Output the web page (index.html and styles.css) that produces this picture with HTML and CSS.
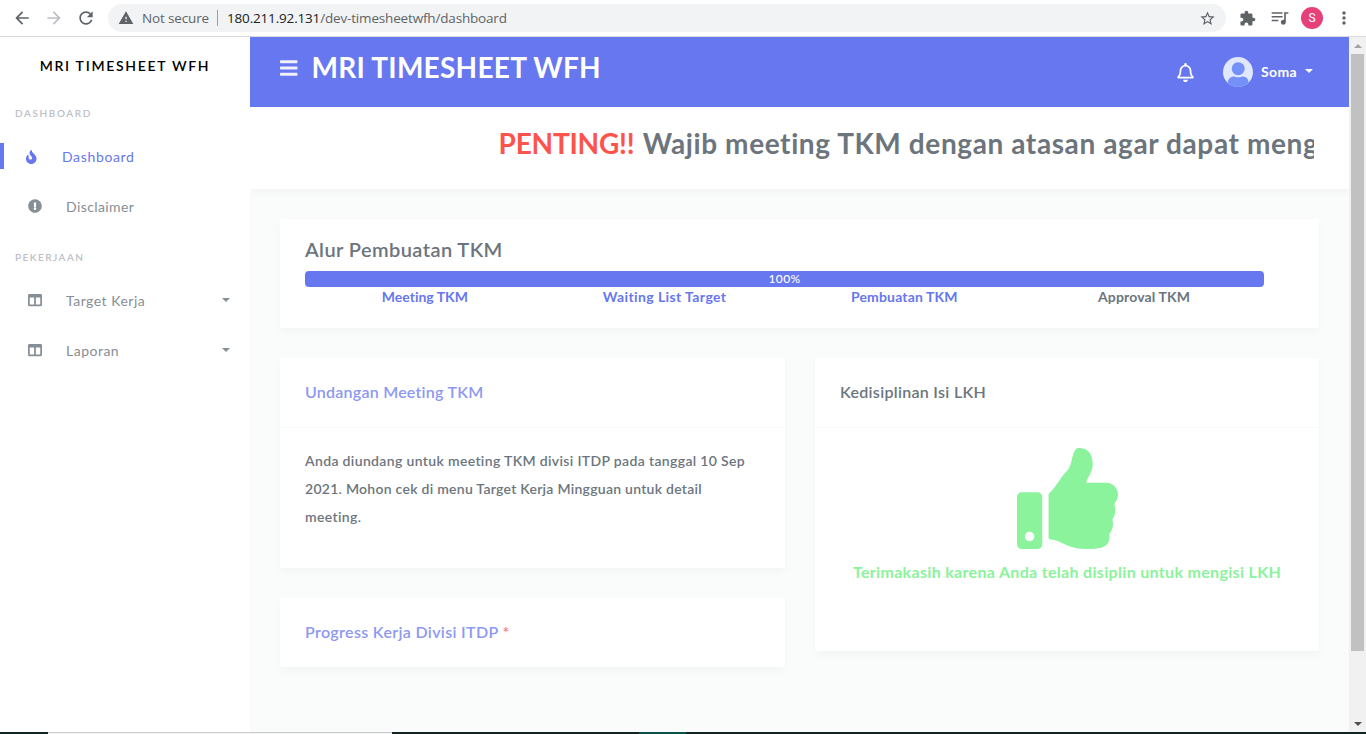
FILE: index.html
```
<!DOCTYPE html>
<html lang="id">
<head>
<meta charset="utf-8">
<title>MRI TIMESHEET WFH</title>
<link rel="stylesheet" href="styles.css">
</head>
<body>
<div class="window">
  <header class="browser">
    <svg class="nav-icon" viewBox="0 0 24 24"><path d="M20 11H7.83l5.59-5.59L12 4l-8 8 8 8 1.41-1.41L7.83 13H20v-2z"/></svg>
    <svg class="nav-icon disabled" viewBox="0 0 24 24"><path d="M12 4l-1.41 1.41L16.17 11H4v2h12.17l-5.58 5.59L12 20l8-8z"/></svg>
    <svg class="nav-icon" viewBox="0 0 24 24"><path d="M17.65 6.35C16.2 4.9 14.21 4 12 4c-4.42 0-7.99 3.58-7.99 8s3.57 8 7.99 8c3.73 0 6.84-2.55 7.73-6h-2.08c-.82 2.33-3.04 4-5.65 4-3.31 0-6-2.69-6-6s2.69-6 6-6c1.66 0 3.14.69 4.22 1.78L13 11h7V4l-2.35 2.35z"/></svg>
    <div class="omnibox">
      <svg class="warn" viewBox="0 0 24 24"><path d="M1 21h22L12 2 1 21zm12-3h-2v-2h2v2zm0-4h-2v-4h2v4z"/></svg>
      <span class="secure">Not secure</span>
      <span class="divider"></span>
      <span class="url"><b>180.211.92.131</b>/dev-timesheetwfh/dashboard</span>
      <svg class="star" viewBox="0 0 24 24"><path d="M22 9.24l-7.19-.62L12 2 9.19 8.63 2 9.24l5.46 4.73L5.82 21 12 17.27 18.18 21l-1.63-7.03L22 9.24zM12 15.4l-3.76 2.27 1-4.28-3.32-2.88 4.38-.38L12 6.1l1.71 4.04 4.38.38-3.32 2.88 1 4.28L12 15.4z"/></svg>
    </div>
    <svg class="ext" viewBox="0 0 24 24"><path d="M20.5 11H19V7c0-1.1-.9-2-2-2h-4V3.5C13 2.12 11.88 1 10.5 1S8 2.12 8 3.5V5H4c-1.1 0-1.99.9-1.99 2v3.8H3.5c1.49 0 2.7 1.21 2.7 2.7s-1.21 2.7-2.7 2.7H2V20c0 1.1.9 2 2 2h3.8v-1.5c0-1.49 1.21-2.7 2.7-2.7 1.49 0 2.7 1.21 2.7 2.7V22H17c1.1 0 2-.9 2-2v-4h1.5c1.38 0 2.5-1.12 2.5-2.5S21.88 11 20.5 11z"/></svg>
    <svg class="media" viewBox="0 0 24 24"><path d="M15 5H2v1.900h13V5zm0 4.500H2v1.900h13V9.500zM2 15.900h8V14H2v1.900zM17 5v9.180c-.31-.11-.65-.18-1-.18-1.66 0-3 1.34-3 3s1.34 3 3 3 3-1.34 3-3V7h3V5h-5z"/></svg>
    <span class="profile">S</span>
    <svg class="more" viewBox="0 0 24 24"><path d="M12 8c1.1 0 2-.9 2-2s-.9-2-2-2-2 .9-2 2 .9 2 2 2zm0 2c-1.1 0-2 .9-2 2s.9 2 2 2 2-.9 2-2-.9-2-2-2zm0 6c-1.1 0-2 .9-2 2s.9 2 2 2 2-.9 2-2-.9-2-2-2z"/></svg>
  </header>

  <div class="viewport">
    <aside class="sidebar">
      <div class="brand">MRI TIMESHEET WFH</div>
      <div class="section">DASHBOARD</div>
      <a class="item active"><svg class="fire" viewBox="0 0 384 512"><path d="M216 23.86c0-23.8-30.65-32.77-44.15-13.04C48 191.85 224 200 224 288c0 35.63-29.11 64.46-64.85 63.99-35.17-.45-63.15-29.77-63.15-64.94v-85.51c0-21.7-26.47-32.23-41.43-16.5C27.8 213.16 0 261.33 0 320c0 105.87 86.13 192 192 192s192-86.13 192-192c0-170.29-168-193-168-296.14z"/></svg><span>Dashboard</span></a>
      <a class="item"><svg viewBox="0 0 512 512"><path d="M504 256c0 136.997-111.043 248-248 248S8 392.997 8 256C8 119.083 119.043 8 256 8s248 111.083 248 248zm-248 50c-25.405 0-46 20.595-46 46s20.595 46 46 46 46-20.595 46-46-20.595-46-46-46zm-43.673-165.346l7.418 136c.347 6.364 5.609 11.346 11.982 11.346h48.546c6.373 0 11.635-4.982 11.982-11.346l7.418-136c.375-6.874-5.098-12.654-11.982-12.654h-63.383c-6.884 0-12.356 5.78-11.981 12.654z"/></svg><span class="disclaimer">Disclaimer</span></a>
      <div class="section second">PEKERJAAN</div>
      <a class="item"><svg viewBox="0 0 512 512"><path d="M464 32H48C21.49 32 0 53.49 0 80v352c0 26.51 21.49 48 48 48h416c26.51 0 48-21.49 48-48V80c0-26.51-21.49-48-48-48zM224 416H64V160h160v256zm224 0H288V160h160v256z"/></svg><span>Target Kerja</span><i class="caret"></i></a>
      <a class="item"><svg viewBox="0 0 512 512"><path d="M464 32H48C21.49 32 0 53.49 0 80v352c0 26.51 21.49 48 48 48h416c26.51 0 48-21.49 48-48V80c0-26.51-21.49-48-48-48zM224 416H64V160h160v256zm224 0H288V160h160v256z"/></svg><span>Laporan</span><i class="caret"></i></a>
    </aside>

    <main class="main">
      <nav class="navbar">
        <svg class="bars" viewBox="0 0 448 512"><path d="M16 132h416c8.837 0 16-7.163 16-16V76c0-8.837-7.163-16-16-16H16C7.163 60 0 67.163 0 76v40c0 8.837 7.163 16 16 16zm0 160h416c8.837 0 16-7.163 16-16v-40c0-8.837-7.163-16-16-16H16c-8.837 0-16 7.163-16 16v40c0 8.837 7.163 16 16 16zm0 160h416c8.837 0 16-7.163 16-16v-40c0-8.837-7.163-16-16-16H16c-8.837 0-16 7.163-16 16v40c0 8.837 7.163 16 16 16z"/></svg>
        <h1>MRI TIMESHEET WFH</h1>
        <svg class="bell" viewBox="0 0 448 512"><path d="M439.39 362.29c-19.32-20.76-55.47-51.99-55.47-154.29 0-77.7-54.48-139.9-127.94-155.16V32c0-17.67-14.32-32-31.98-32s-31.98 14.33-31.98 32v20.84C118.56 68.1 64.08 130.3 64.08 208c0 102.3-36.15 133.53-55.47 154.29-6 6.45-8.66 14.16-8.61 21.71.11 16.4 12.98 32 32.1 32h383.8c19.12 0 32-15.6 32.1-32 .05-7.55-2.61-15.27-8.61-21.71zM67.53 368c21.22-27.97 44.42-74.33 44.53-159.42 0-.2-.06-.38-.06-.58 0-61.86 50.14-112 112-112s112 50.14 112 112c0 .2-.06.38-.06.58.11 85.1 23.31 131.46 44.53 159.42H67.53zM224 512c35.32 0 63.97-28.65 63.97-64H160.03c0 35.35 28.65 64 63.97 64z"/></svg>
        <svg class="avatar" viewBox="0 0 30 30"><defs><clipPath id="disc"><circle cx="15" cy="15" r="15"/></clipPath></defs><g clip-path="url(#disc)"><rect width="30" height="30" fill="#dfe8ff"/><circle cx="15.2" cy="11.7" r="6.5" fill="#7690fa"/><path d="M5 30v-5c0-3.200 2.500-5.600 6-5.600 2 1 6.500 1 8.500 0 3.500 0 6 2.400 6 5.600v5z" fill="#7690fa"/></g></svg>
        <span class="user">Soma</span><i class="caret"></i>
      </nav>
      <section class="notice"><div class="ticker"><span class="alert">PENTING!!</span> Wajib meeting TKM dengan atasan agar dapat meng</div></section>

      <div class="content">
        <section class="card flow">
          <h2>Alur Pembuatan TKM</h2>
          <div class="progress">100%</div>
          <div class="steps"><span>Meeting TKM</span><span class="wide">Waiting List Target</span><span class="make">Pembuatan TKM</span><span class="todo">Approval TKM</span></div>
        </section>
        <div class="columns">
          <div class="column">
            <section class="card">
              <h3 class="meeting">Undangan Meeting TKM</h3>
              <p>Anda diundang untuk meeting TKM divisi ITDP pada tanggal 10 Sep<br><span class="tight">2021. Mohon cek di menu Target Kerja Mingguan untuk detail</span><br>meeting.</p>
            </section>
            <section class="card">
              <h3 class="division">Progress Kerja Divisi ITDP <em>*</em></h3>
            </section>
          </div>
          <section class="card discipline">
            <h3>Kedisiplinan Isi LKH</h3>
            <div class="praise">
              <svg viewBox="0 0 512 512"><path d="M104 224H24c-13.255 0-24 10.745-24 24v240c0 13.255 10.745 24 24 24h80c13.255 0 24-10.745 24-24V248c0-13.255-10.745-24-24-24zM64 472c-13.255 0-24-10.745-24-24s10.745-24 24-24 24 10.745 24 24-10.745 24-24 24zM384 81.452c0 42.416-25.97 66.208-33.277 94.548h101.723c33.397 0 59.397 27.746 59.553 58.098.084 17.938-7.546 37.249-19.439 49.197l-.11.11c9.836 23.337 8.237 56.037-9.308 79.469 8.681 25.895-.069 57.704-16.382 74.757 4.298 17.598 2.244 32.575-6.148 44.632C440.202 511.587 389.616 512 346.839 512l-2.845-.001c-48.287-.017-87.806-17.598-119.56-31.725-15.957-7.099-36.821-15.887-52.651-16.178-6.54-.12-11.783-5.457-11.783-11.998v-213.77c0-3.2 1.282-6.271 3.558-8.521 39.614-39.144 56.648-80.587 89.117-113.111 14.804-14.832 20.188-37.236 25.393-58.902C282.515 39.293 291.817 0 312 0c24 0 72 8 72 81.452z"/></svg>
              <strong>Terimakasih karena Anda telah disiplin untuk mengisi LKH</strong>
            </div>
          </section>
        </div>
      </div>
    </main>

    <div class="scrollbar"><i class="up"></i><span class="thumb"></span><i class="down"></i></div>
  </div>
  <div class="taskbar"><span class="preview"></span><span class="running"></span></div>
</div>
</body>
</html>
```
FILE: styles.css
```
* { box-sizing: border-box; }
body { margin: 0; font: 14px/20px Lato, sans-serif; font-variant-ligatures: none; color: #6c757d; background: #fff; white-space: nowrap; }
h1, h2, h3, p { margin: 0; }
svg { fill: currentColor; flex: none; display: block; }
.window { display: flex; flex-direction: column; height: 734px; overflow: hidden; }

/* Browser toolbar */
.browser { height: 37px; flex: none; display: flex; align-items: center; padding-left: 12px; border-bottom: 1px solid #d9dbde; color: #5f6368; }
.nav-icon { width: 20px; height: 20px; margin-right: 12px; }
.nav-icon.disabled { color: #bdbfc2; }
.omnibox { width: 1118px; height: 28px; flex: none; border-radius: 14px; background: #f1f3f4; display: flex; align-items: center; padding: 0 10px; font: 13.5px/20px "Open Sans", sans-serif; }
.warn { width: 16px; height: 16px; margin-right: 8px; }
.secure { width: 75px; letter-spacing: -.15px; }
.divider { width: 1px; height: 16px; background: #9aa0a6; margin-right: 9px; }
.url { letter-spacing: -.17px; }
.url b { font-weight: 400; color: #202124; }
.star { width: 17px; height: 17px; margin-left: auto; }
.ext { width: 17px; height: 17px; margin-left: 13px; }
.media { width: 20px; height: 20px; margin-left: 14px; }
.profile { width: 22px; height: 22px; border-radius: 50%; background: #e6407a; color: #fff; font: 12px/22px Roboto, sans-serif; text-align: center; margin-left: 11px; }
.more { width: 20px; height: 20px; margin-left: 11px; }

.viewport { height: 695px; flex: none; display: flex; }

/* Sidebar */
.sidebar { width: 250px; flex: none; padding-top: 19px; letter-spacing: .5px; }
.brand { text-align: center; font-weight: 600; color: #000; letter-spacing: 1.7px; }
.section { padding-left: 15px; margin: 27px 0 9px; height: 20px; font-size: 10px; font-weight: 600; letter-spacing: 1.6px; color: #bcc1c6; }
.second { margin: 15px 0 9px; letter-spacing: 1.45px; }
.item { height: 50px; display: flex; align-items: center; padding: 0 20px 0 28px; color: #868e96; }
.item svg { width: 14px; height: 14px; margin: 0 24px 2px 0; }
.item .fire { width: 10.500px; margin: 0 25.500px 0 0; }
.item.active { padding-left: 22px; border-left: 4px solid #6777ef; border-image: linear-gradient(transparent 12px, #6777ef 12px 37px, transparent 37px) 1 / 0 0 0 4px; color: #6777ef; letter-spacing: .65px; }
.disclaimer { letter-spacing: .4px; }
.caret { width: 0; height: 0; border: 4px solid transparent; border-top-color: currentColor; border-bottom: 0; }
.item .caret { margin: 0 0 3px auto; }

/* Main column */
.main { width: 1099px; flex: none; background: #fafcfb; overflow: hidden; }
.navbar { height: 70px; background: #6777ef; color: #fff; display: flex; align-items: center; padding: 0 36px 0 30px; }
.bars { width: 17.500px; height: 20px; margin: -8px 14px 0 0; opacity: .9; }
.navbar h1 { font: 700 28px/34px Lato, sans-serif; letter-spacing: .26px; margin-top: -10px; }
.bell { width: 17px; height: 19px; margin: 0 29px 0 auto; }
.avatar { width: 30px; height: 30px; }
.user { margin: 0 8px; font-weight: 700; letter-spacing: .35px; }
.navbar .caret { margin-bottom: 3px; }
.notice { height: 82px; background: #fff; box-shadow: 0 4px 8px rgba(0, 0, 0, .03); padding: 17px 35px 0 248.500px; }
.ticker { overflow: hidden; height: 42px; font: 700 28px/39px Lato, sans-serif; letter-spacing: .6px; }
.alert { color: #fc544b; letter-spacing: -.2px; margin-right: 1px; }
.content { padding: 30px; display: flex; flex-direction: column; gap: 30px; }
.card { background: #fff; border-radius: 3px; box-shadow: 0 4px 8px rgba(0, 0, 0, .03); }
.flow { height: 109px; padding: 18px 55px 0 25px; }
.flow h2 { font: 600 20px/24px Lato, sans-serif; letter-spacing: .42px; margin-bottom: 10px; }
.progress { height: 16px; border-radius: 4px; background: #6777ef; color: #fff; text-align: center; font: 500 12px/16px Lato, sans-serif; letter-spacing: .4px; }
.steps { display: grid; grid-template-columns: repeat(4, 1fr); text-align: center; font-weight: 700; color: #6777ef; }
.steps .wide { letter-spacing: .4px; }
.steps .make { letter-spacing: .15px; }
.steps .todo { color: #6c757d; letter-spacing: .15px; }
.columns { display: grid; grid-template-columns: 505px 504px; gap: 30px; align-items: start; }
.column { display: flex; flex-direction: column; gap: 30px; }
.card h3 { height: 70px; padding: 0 25px; border-bottom: 1px solid #f9f9f9; font: 600 16px/67px Lato, sans-serif; letter-spacing: .3px; }
.card .meeting { color: #8d98f3; letter-spacing: .24px; }
.card .division { height: 69px; border: 0; color: #8d98f3; letter-spacing: .34px; }
.division em { font-style: normal; color: #fc7a73; }
.card p { height: 140px; padding: 19px 25px; font-weight: 600; line-height: 28px; letter-spacing: .35px; }
.tight { letter-spacing: .27px; }
.discipline { height: 293px; }
.praise { display: flex; flex-direction: column; align-items: center; padding-top: 20px; color: #8bf39b; }
.praise svg { width: 101px; height: 101px; }
.praise strong { font-size: 16px; line-height: 24px; margin-top: 11px; letter-spacing: .32px; }

/* Page scrollbar and desktop edge */
.scrollbar { width: 17px; flex: none; background: #f1f1f1; display: flex; flex-direction: column; align-items: center; padding: 7px 0 6px; }
.scrollbar i { border: 4px solid transparent; }
.scrollbar .up { border-bottom-color: #a3a3a3; border-top: 0; margin-bottom: 6px; }
.scrollbar .down { border-top-color: #505050; border-bottom: 0; margin-top: auto; }
.thumb { width: 13px; height: 597px; background: #c1c1c1; }
.taskbar { height: 2px; flex: none; background: #122422; display: flex; padding-left: 48px; }
.preview { width: 344px; background: linear-gradient(#c9c9c9 50%, #f4f4f4 50%); margin-right: 247px; }
.running { width: 47px; background: #0c5048; }
```
